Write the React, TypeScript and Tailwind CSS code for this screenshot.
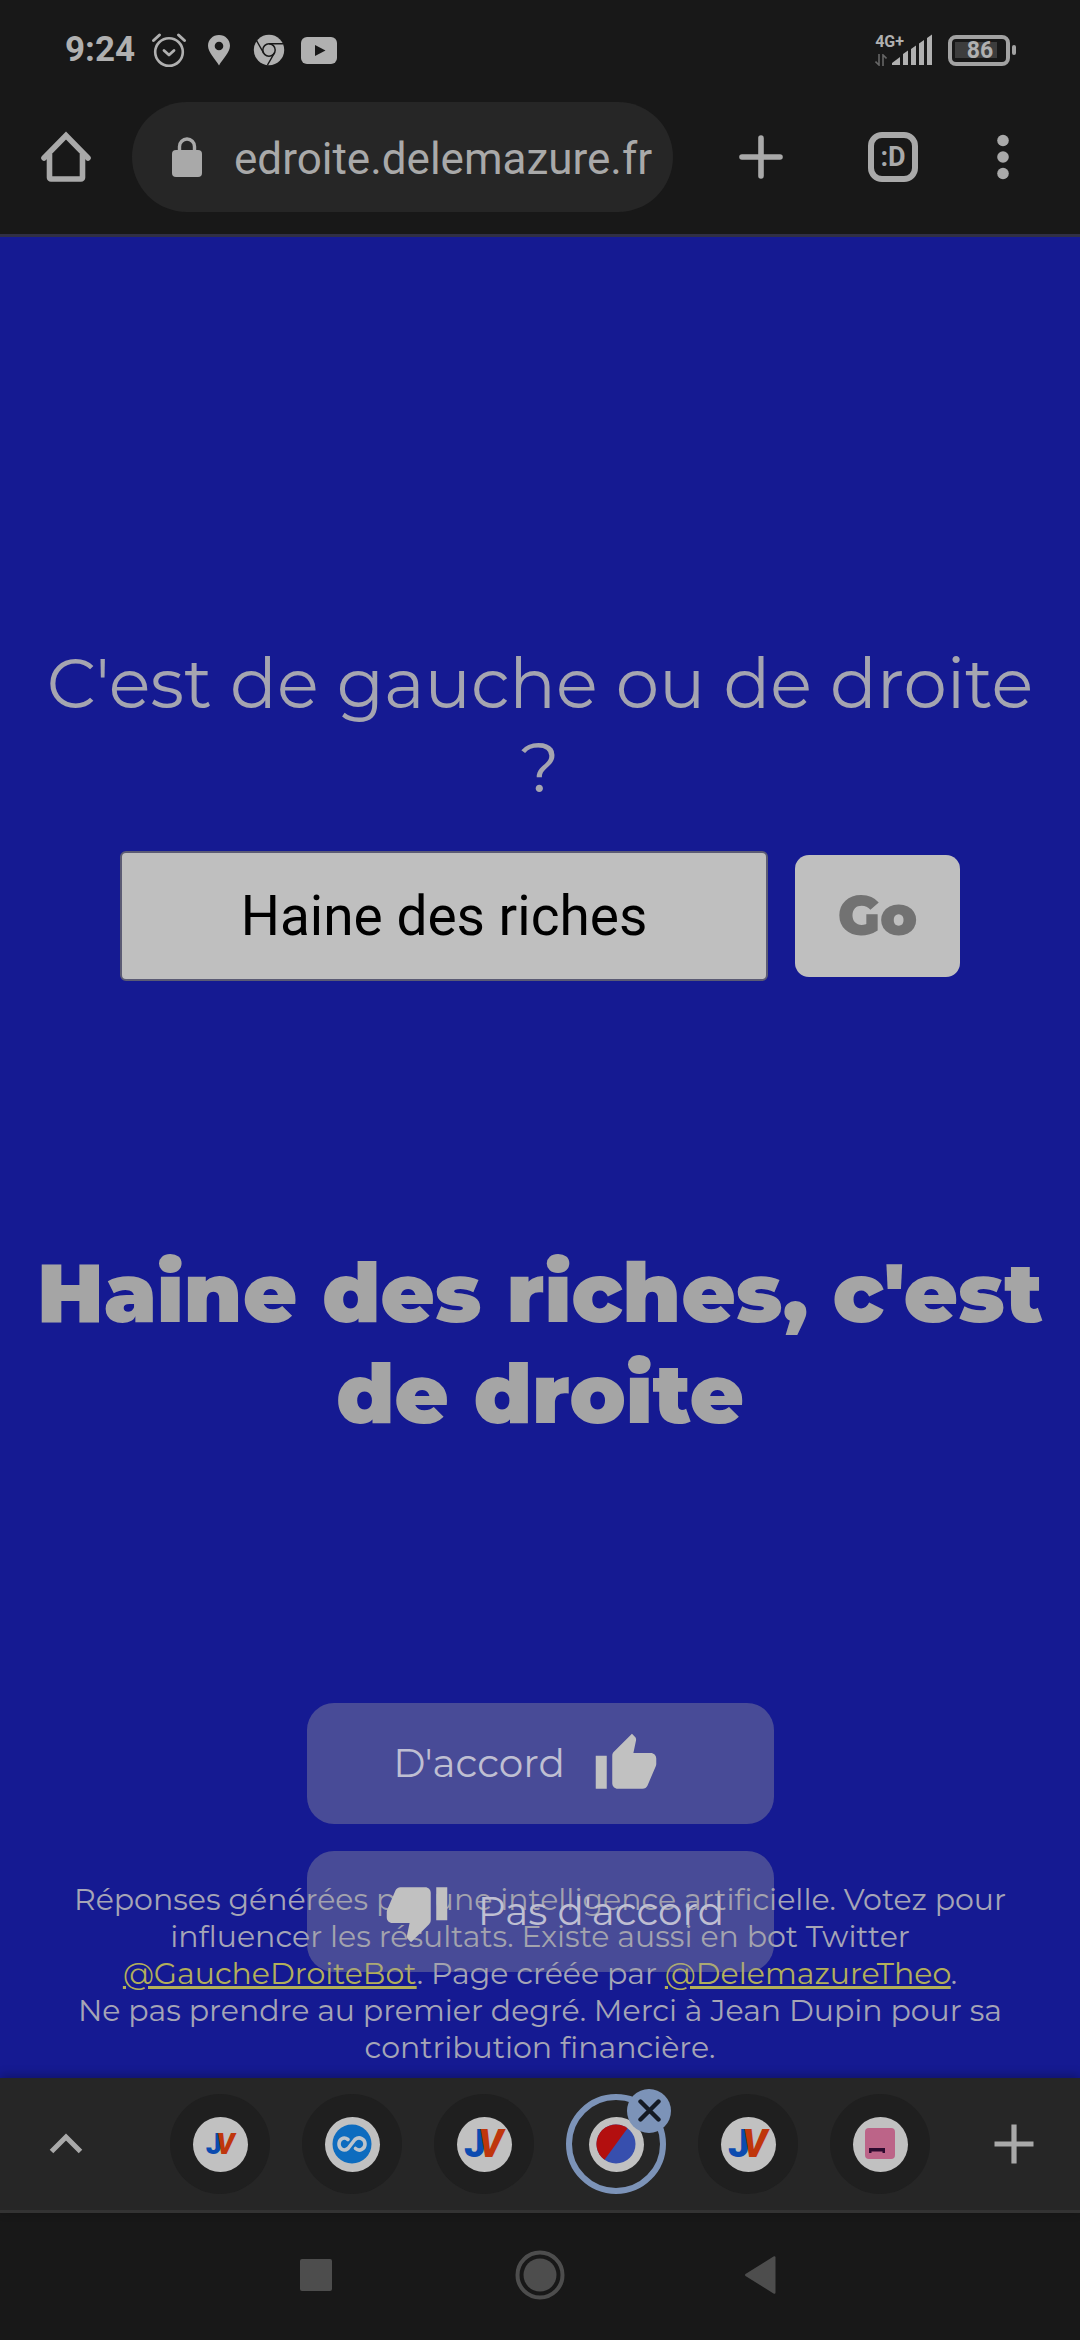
import React, { useState } from "react";
import { MdThumbUp, MdThumbDown } from "react-icons/md";

const StatusBar = () => {
  return (
    <div className="flex h-[92px] items-center justify-between pt-2 pr-16 pl-[65px] text-[#b0b0b0]">
      <div className="flex items-center">
        <span className="text-[35px] leading-10 font-bold">9:24</span>
        <svg className="ml-4 h-9 w-9" viewBox="0 0 36 36" fill="none" stroke="currentColor">
          <circle cx="18" cy="20" r="13.8" strokeWidth="2.6" />
          <path d="M13 18.5l5 4.5 5-4.5" strokeWidth="2.8" strokeLinecap="round" strokeLinejoin="round" />
          <path d="M2.5 8.5l6-5.5M33.5 8.5l-6-5.5" strokeWidth="3" strokeLinecap="round" />
        </svg>
        <svg className="ml-5 h-8 w-6" viewBox="0 0 24 32" fill="currentColor">
          <path
            fillRule="evenodd"
            d="M12 1C5.6 1 1 5.8 1 11.7 1 18.5 8.5 25 12 31.5 15.5 25 23 18.5 23 11.7 23 5.8 18.4 1 12 1zm0 6.7a4.3 4.3 0 1 1 0 8.6 4.3 4.3 0 0 1 0-8.6z"
          />
        </svg>
        <svg className="ml-[22px] h-8 w-8" viewBox="0 0 32 32">
          <circle cx="16" cy="16" r="15.2" fill="currentColor" />
          <g fill="none" stroke="#181818" strokeWidth="1.5">
            <circle cx="16" cy="16" r="6.2" />
            <path d="M16 9.8H30M10.6 19L3.5 6.5M21.4 19L14.5 31" />
          </g>
        </svg>
        <svg className="ml-4 h-[27px] w-9" viewBox="0 0 36 27">
          <rect width="36" height="27" rx="6" fill="currentColor" />
          <path d="M14 8l10.5 5.5L14 19z" fill="#181818" />
        </svg>
      </div>
      <div className="flex items-center">
        <div className="flex h-8 flex-col justify-between">
          <span className="text-base leading-4 font-bold">4G+</span>
          <svg className="h-3 w-3" viewBox="0 0 12 12" fill="none" stroke="#666666" strokeWidth="1.6">
            <path d="M4 0v11L0.5 7.5M8 12V1l3.5 3.5" />
          </svg>
        </div>
        <svg className="-ml-3 h-8 w-10" viewBox="0 0 40 32" fill="currentColor">
          <path d="M0 31v-2l8-6v8zM11 31V20l5-3.5V31zM19 31V15l5-3.5V31zM27 31V9.5L32 6v25zM35 31V4l5-3.5V31z" />
        </svg>
        <div className="ml-4 flex h-[31px] w-[62px] items-center rounded-lg border-4 border-[#a2a2a2] p-[3px]">
          <div className="flex h-4 w-[42px] items-center justify-center bg-[#3d3d3d] pt-[2px] pl-2 text-[23px] leading-6 font-bold">
            86
          </div>
        </div>
        <div className="ml-[2px] h-[10px] w-1 rounded-xs bg-[#a2a2a2]" />
      </div>
    </div>
  );
};

const Toolbar = () => {
  return (
    <div className="flex items-center pt-[10px] pr-[52px] pb-[22px] pl-10 text-[#a9a9a9]">
      <button aria-label="Accueil">
        <svg className="h-[52px] w-[52px]" viewBox="0 0 52 52" fill="none" stroke="currentColor" strokeWidth="5.6">
          <path d="M4 27L26 4.5 48 27" strokeLinecap="round" />
          <path d="M9.5 23v23.5a1.500 1.500 0 0 0 1.500 1.500h30a1.500 1.500 0 0 0 1.500-1.500V23" />
        </svg>
      </button>
      <div className="ml-10 flex h-[110px] flex-1 items-center rounded-full bg-[#262626] pr-5 pl-10">
        <svg className="h-10 w-[30px] shrink-0" viewBox="0 0 30 40">
          <rect y="13" width="30" height="27" rx="4" fill="currentColor" />
          <path d="M7.5 15V9.5a7.5 7.5 0 0 1 15 0V15" fill="none" stroke="currentColor" strokeWidth="3.4" />
        </svg>
        <input
          aria-label="Adresse"
          readOnly
          value="edroite.delemazure.fr"
          className="ml-8 h-16 w-0 flex-1 bg-transparent pt-1 text-[44px] outline-none"
        />
      </div>
      <button aria-label="Nouvel onglet" className="ml-16">
        <svg className="h-12 w-12" viewBox="0 0 48 48" stroke="currentColor" strokeWidth="5.6" strokeLinecap="round">
          <path d="M24 5v38M5 24h38" />
        </svg>
      </button>
      <button
        aria-label="Onglets"
        className="ml-[83px] flex h-[50px] w-[50px] items-center justify-center rounded-[14px] border-6 border-current text-[27px] font-bold"
      >
        :D
      </button>
      <button aria-label="Menu" className="ml-[74px]">
        <svg className="h-12 w-9" viewBox="0 0 36 48" fill="currentColor">
          <circle cx="11" cy="7.5" r="5.8" />
          <circle cx="11" cy="24" r="5.8" />
          <circle cx="11" cy="40.5" r="5.8" />
        </svg>
      </button>
    </div>
  );
};

const JvLogo = ({ size }: { size: number }) => {
  return (
    <svg width={size} height={size} viewBox="0 0 50 50">
      <text x="5" y="38" fontFamily="Roboto, sans-serif" fontWeight="900" fontSize="39">
        <tspan fill="#0b4bb0">J</tspan>
        <tspan dx="-8" fontStyle="italic" fill="#bf360c">
          V
        </tspan>
      </text>
    </svg>
  );
};

const LoopLogo = () => {
  return (
    <svg className="h-10 w-10" viewBox="0 0 40 40">
      <circle cx="20" cy="20" r="19.5" fill="#0d6cbf" />
      <path
        d="M16 15.5c-4.500-3.500-9 0-9 4.500s4.500 8 9 4.500l7-9c4.500-3.500 10-0.500 10 4.500s-5.500 8-9.500 4.500"
        fill="none"
        stroke="#bcc4cc"
        strokeWidth="3.6"
        strokeLinecap="round"
      />
    </svg>
  );
};

const SplitLogo = () => {
  return (
    <svg className="h-10 w-10" viewBox="0 0 40 40">
      <circle cx="20" cy="20" r="19.5" fill="#374fae" />
      <path d="M31.5 4.2A19.500 19.500 0 1 0 8.500 35.800z" fill="#b30f0f" />
    </svg>
  );
};

const PinkLogo = () => {
  return (
    <svg className="h-8 w-8" viewBox="0 0 32 32">
      <rect x="1" y="0" width="30" height="31" rx="4" fill="#bc6488" />
      <path d="M5 25v-5h16v5h-2.500v-1.500h-11V25z" fill="#2c0a2e" />
    </svg>
  );
};

const tabs = [
  { name: "Jeux 1", logo: <JvLogo size={37} /> },
  { name: "Boucle", logo: <LoopLogo /> },
  { name: "Jeux 2", logo: <JvLogo size={50} /> },
  { name: "De gauche ou de droite", logo: <SplitLogo />, active: true },
  { name: "Jeux 3", logo: <JvLogo size={50} /> },
  { name: "Rose", logo: <PinkLogo /> },
];

const TabStrip = () => {
  return (
    <div className="relative flex h-[135px] items-center justify-between border-b-3 border-[#333333] bg-[#262626] px-[46px] text-[#a9a9a9] shadow-[0_-2px_10px_rgba(0,0,0,0.3)]">
      <button aria-label="Agrandir">
        <svg className="h-10 w-10" viewBox="0 0 40 40" fill="none" stroke="currentColor" strokeWidth="5">
          <path d="M5.5 27.5L20 13l14.5 14.5" />
        </svg>
      </button>
      <div className="flex gap-8 pl-5">
        {tabs.map((tab) => (
          <div key={tab.name} className="relative">
            <button
              aria-label={tab.name}
              className={
                tab.active
                  ? "flex h-[100px] w-[100px] items-center justify-center rounded-full border-6 border-[#7c93b8]"
                  : "flex h-[100px] w-[100px] items-center justify-center rounded-full bg-[#1f1f1f]"
              }
            >
              <span className="flex h-[55px] w-[55px] items-center justify-center rounded-full bg-[#c1c1c1]">
                {tab.logo}
              </span>
            </button>
            {tab.active && (
              <button
                aria-label="Fermer"
                className="absolute -top-[5px] -right-[5px] flex h-11 w-11 items-center justify-center rounded-full bg-[#7c93b8]"
              >
                <svg className="h-6 w-6" viewBox="0 0 24 24" stroke="#141a24" strokeWidth="4.4" strokeLinecap="round">
                  <path d="M3.5 2.5l18 18M21.5 2.5l-18 18" />
                </svg>
              </button>
            )}
          </div>
        ))}
      </div>
      <button aria-label="Ajouter un onglet">
        <svg className="h-10 w-10" viewBox="0 0 40 40" stroke="currentColor" strokeWidth="5.2">
          <path d="M20 0.5v39M0.5 20h39" />
        </svg>
      </button>
    </div>
  );
};

const NavBar = () => {
  return (
    <div className="flex h-[127px] items-center justify-center gap-[172px] pb-1 text-[#4d4d4d]">
      <button aria-label="Applications récentes">
        <svg className="h-[50px] w-[50px]" viewBox="0 0 50 50" fill="currentColor">
          <rect x="7" y="9" width="32" height="32" rx="2" />
        </svg>
      </button>
      <button aria-label="Écran d'accueil">
        <svg className="h-[50px] w-[50px]" viewBox="0 0 50 50">
          <circle cx="25" cy="25" r="22.5" fill="none" stroke="currentColor" strokeWidth="4" />
          <circle cx="25" cy="25" r="16.5" fill="currentColor" />
        </svg>
      </button>
      <button aria-label="Retour">
        <svg className="h-[50px] w-[50px]" viewBox="0 0 50 50" fill="currentColor">
          <path d="M8.500 24q-1 1 0 2l28 17.500q2 1 2-1v-35q0-2-2-1z" />
        </svg>
      </button>
    </div>
  );
};

const App = () => {
  const [text, setText] = useState("Haine des riches");

  return (
    <div className="flex min-h-screen flex-col bg-[#181818] font-[Roboto,sans-serif]">
      <header className="border-b-3 border-[#302f45]">
        <StatusBar />
        <Toolbar />
      </header>

      <main className="relative flex-1 bg-[#151a92] pt-[404px] text-center font-[Montserrat,Inter,sans-serif]">
        <h1 className="px-8 text-[69px] leading-[84px] text-[#a5a5b0]">
          C'est de gauche ou de droite
          <br />?
        </h1>

        <form
          className="mt-[42px] flex items-center justify-center gap-[27px]"
          onSubmit={(e) => e.preventDefault()}
        >
          <input
            aria-label="Votre texte"
            value={text}
            onChange={(e) => setText(e.target.value)}
            className="h-[130px] w-3/5 rounded-md border-2 border-[#5b5b74] bg-[#bfbfbf] text-center font-[Roboto,sans-serif] text-[55px] text-black outline-none"
          />
          <button className="h-[122px] w-[165px] rounded-[14px] bg-[#bfbfbf] text-[55px] font-black text-[#727272]">
            Go
          </button>
        </form>

        <h2 className="mt-[261px] px-6 text-[83px] leading-[101px] font-black text-[#a5a5a5]">
          Haine des riches, c'est
          <br />
          de droite
        </h2>

        {/* the vote buttons sit on top of the footer text */}
        <div className="relative z-10 mt-[259px] flex flex-col items-center gap-[27px] text-[39px] text-[#bfbfd2]">
          <button className="flex h-[121px] w-[467px] items-center justify-center gap-7 rounded-[27px] bg-[#a0a0a0]/37 pr-7">
            D'accord
            <MdThumbUp className="h-[66px] w-[66px] text-[#c1c1c1]" />
          </button>
          <button className="flex h-[121px] w-[467px] items-center justify-center gap-7 rounded-[27px] bg-[#a0a0a0]/37 pl-7">
            <MdThumbDown className="h-[66px] w-[66px] text-[#c1c1c1]" />
            Pas d'accord
          </button>
        </div>

        <footer className="absolute inset-x-0 bottom-3 text-[30px] leading-[37px] text-[#a5a5b6]">
          Réponses générées par une intelligence artificielle. Votez pour
          <br />
          influencer les résultats. Existe aussi en bot Twitter
          <br />
          <a href="#bot" className="text-[#b3af5a] underline decoration-3">
            @GaucheDroiteBot
          </a>
          . Page créée par{" "}
          <a href="#theo" className="text-[#b3af5a] underline decoration-3">
            @DelemazureTheo
          </a>
          .
          <br />
          Ne pas prendre au premier degré. Merci à Jean Dupin pour sa
          <br />
          contribution financière.
        </footer>
      </main>

      <TabStrip />
      <NavBar />
    </div>
  );
};

export default App;
